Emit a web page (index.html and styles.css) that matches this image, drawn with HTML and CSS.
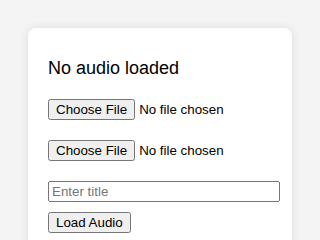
FILE: index.html
```html
<!DOCTYPE html>
<html lang="en">
<head>
  <meta charset="UTF-8">
  <meta name="viewport" content="width=device-width, initial-scale=1.0">
  <title>Audio Player</title>
  <link rel="stylesheet" href="styles.css">
</head>
<body>
  <div class="player">
    <h2 id="trackTitle">No audio loaded</h2>
    <div class="field"><input type="file" id="audioFile" accept="audio/*"></div>
    <div class="field"><input type="file" id="coverFile" accept="image/*"></div>
    <div class="field small"><input type="text" id="titleInput" placeholder="Enter title"></div>
    <button id="loadBtn">Load Audio</button>
  </div>
</body>
</html>
```

FILE: styles.css
```css
body {
  background-color: #f4f4f4;
  font-family: Arial, "Liberation Sans", sans-serif;
  margin: 0;
  padding: 28px;
}

.player {
  background-color: white;
  border-radius: 8px;
  box-shadow: 0 0 10px rgba(0, 0, 0, 0.1);
  padding: 20px;
  min-height: 300px;
}

.player h2 {
  font-size: 18px;
  font-weight: normal;
  margin: 10px 0 20px;
}

.field {
  margin-bottom: 20px;
}

.field.small {
  margin-bottom: 10px;
}

#titleInput {
  width: 100%;
}
```
